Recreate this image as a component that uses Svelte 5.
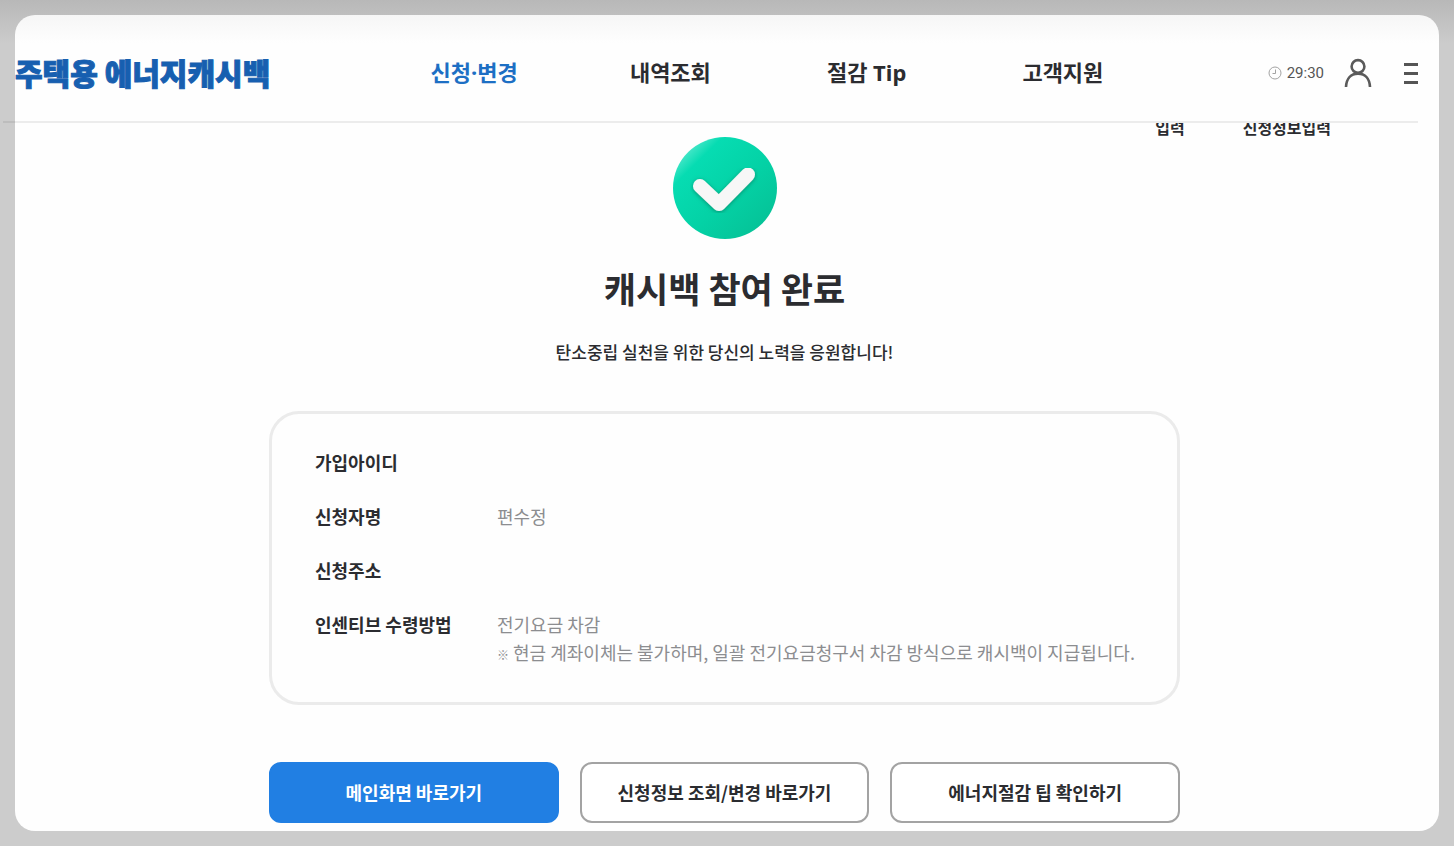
<script>
  const menus = ["신청·변경", "내역조회", "절감 Tip", "고객지원"];
  const current = "신청·변경";

  const rows = [
    {label: "가입아이디"},
    {label: "신청자명", value: "편수정"},
    {label: "신청주소"},
    {
      label: "인센티브 수령방법",
      value: "전기요금 차감",
      note: "현금 계좌이체는 불가하며, 일괄 전기요금청구서 차감 방식으로 캐시백이 지급됩니다.",
    },
  ];
</script>

<div class="page">
  <header>
    <a class="logo" href="/">주택용 에너지캐시백</a>

    <nav>
      {#each menus as menu}
        <a href="/" class:active={menu === current}>{menu}</a>
      {/each}
    </nav>

    <div class="tools">
      <span class="timer">
        <svg width="14" height="14" viewBox="0 0 14 14" fill="none" stroke="#a3a3a3">
          <circle cx="7" cy="7" r="6" />
          <path d="M7.5 3.5V7.5H4.5" />
        </svg>
        29:30
      </span>
      <button class="icon" aria-label="내 정보">
        <svg width="28" height="30" viewBox="0 0 28 30" fill="none" stroke="#5a5a5a" stroke-width="2.6">
          <circle cx="14" cy="8.5" r="6.4" />
          <path d="M2 29C2.4 20.500 7 15.600 14 15.600S25.600 20.500 26 29" />
        </svg>
      </button>
      <button class="icon" aria-label="전체 메뉴">
        <svg width="14" height="24" viewBox="0 0 14 24" stroke="#555" stroke-width="3">
          <path d="M0 3.500H14M0 12.500H14M0 21.500H14" />
        </svg>
      </button>
    </div>
  </header>

  <div class="steps">
    <span>입력</span>
    <span>신청정보입력</span>
  </div>

  <main>
    <svg class="check" width="104" height="102" viewBox="0 0 104 102">
      <defs>
        <linearGradient id="disc" x1="0" y1="0" x2="1" y2="1">
          <stop offset="0.1" stop-color="#5cead0" />
          <stop offset="0.24" stop-color="#06dcb2" />
          <stop offset="0.55" stop-color="#04d2a6" />
          <stop offset="1" stop-color="#06bd92" />
        </linearGradient>
        <filter id="shade" x="-20%" y="-20%" width="140%" height="150%">
          <feDropShadow dx="0" dy="1" stdDeviation="2" flood-color="#04745a" flood-opacity="0.7" />
        </filter>
      </defs>
      <ellipse cx="52" cy="51" rx="52" ry="51" fill="url(#disc)" />
      <path
        d="M27 49L46 67L75 37.500"
        fill="none"
        stroke="#f7f7f7"
        stroke-width="14"
        stroke-linecap="round"
        stroke-linejoin="round"
        filter="url(#shade)"
      />
    </svg>

    <h1>캐시백 참여 완료</h1>
    <p class="lead">탄소중립 실천을 위한 당신의 노력을 응원합니다!</p>

    <dl>
      {#each rows as row}
        <dt>{row.label}</dt>
        <dd>
          {row.value ?? ""}
          {#if row.note}
            <p class="note"><small>※</small> {row.note}</p>
          {/if}
        </dd>
      {/each}
    </dl>

    <div class="buttons">
      <button class="primary">메인화면 바로가기</button>
      <button>신청정보 조회/변경 바로가기</button>
      <button>에너지절감 팁 확인하기</button>
    </div>
  </main>
</div>

<style>
  :global(body) {
    margin: 0;
    min-height: 100vh;
    background: #ccc linear-gradient(#b8b8b8, #ccc) no-repeat 0 0 / 100% 44px;
    font-family: "Noto Sans CJK KR", "Noto Sans", sans-serif;
    color: #2b2c30;
  }

  .page {
    box-sizing: border-box;
    min-height: calc(100vh - 30px);
    margin: 15px;
    border-radius: 20px;
    background: linear-gradient(#f6f6f6, #fefefe 28px);
  }

  header {
    display: grid;
    grid-template-columns: 361px 1fr 257px;
    align-items: center;
    box-sizing: border-box;
    height: 108px;
    margin: 0 21px 0 -12px;
    padding: 10px 0 0 12px;
    border-bottom: 2px solid rgba(0, 0, 0, 0.07);
  }

  a {
    color: inherit;
    text-decoration: none;
    white-space: nowrap;
  }

  .logo {
    padding-bottom: 2px;
    font-size: 30px;
    font-weight: 900;
    line-height: 40px;
    color: #175fb0;
    -webkit-text-stroke: 1px #175fb0;
  }

  nav {
    display: grid;
    grid-template-columns: repeat(4, 1fr);
    padding-bottom: 2px;
    font-family: "Noto Sans", "Noto Sans CJK KR", sans-serif;
    font-size: 22px;
    font-weight: 700;
    line-height: 32px;
    text-align: center;
  }

  .active {
    color: #1d6fc4;
  }

  .tools {
    display: flex;
    align-items: center;
    justify-content: flex-end;
  }

  .timer {
    display: flex;
    align-items: center;
    gap: 5px;
    font-family: Roboto, sans-serif;
    font-size: 15px;
    color: #555;
  }

  button {
    font-family: inherit;
    cursor: pointer;
  }

  .icon {
    display: flex;
    margin-left: 20px;
    padding: 0;
    border: 0;
    background: none;
  }

  .icon + .icon {
    margin-left: 32px;
  }

  /* the step labels are scrolled half under the header */
  .steps {
    display: flex;
    align-items: flex-end;
    justify-content: flex-end;
    gap: 58px;
    height: 14px;
    padding-right: 108px;
    overflow: hidden;
    font-size: 16px;
    font-weight: 700;
    line-height: 20px;
  }

  main {
    display: flex;
    flex-direction: column;
    align-items: center;
    max-width: 911px;
    margin: 0 auto;
    padding: 0 5px 8px 0;
  }

  .check {
    display: block;
  }

  h1 {
    margin: 24px 0 0;
    font-size: 35px;
    font-weight: 700;
    line-height: 50px;
  }

  p {
    margin: 0;
  }

  .lead {
    margin-top: 26px;
    font-size: 17px;
    font-weight: 500;
    line-height: 26px;
  }

  dl {
    display: grid;
    grid-template-columns: 182px 1fr;
    row-gap: 26px;
    box-sizing: border-box;
    width: 100%;
    margin: 46px 0 57px;
    padding: 34px 32px 36px 43px;
    border: 3px solid #ebebeb;
    border-radius: 30px;
    font-size: 18px;
    line-height: 28px;
  }

  dt {
    font-weight: 700;
  }

  dd {
    margin: 0;
    color: #8c8d90;
  }

  .note small {
    font-size: 12px;
    font-weight: 700;
    line-height: 1;
    vertical-align: middle;
  }

  .buttons {
    display: grid;
    grid-template-columns: repeat(3, 1fr);
    gap: 21px;
    width: 100%;
  }

  .buttons button {
    height: 61px;
    padding: 0 0 2px;
    border: 2px solid #a3a3a3;
    border-radius: 12px;
    background: #fff;
    font-size: 18px;
    font-weight: 700;
    color: #2b2c30;
  }

  .buttons .primary {
    border-color: #217fe3;
    background: #217fe3;
    color: #fff;
  }
</style>
